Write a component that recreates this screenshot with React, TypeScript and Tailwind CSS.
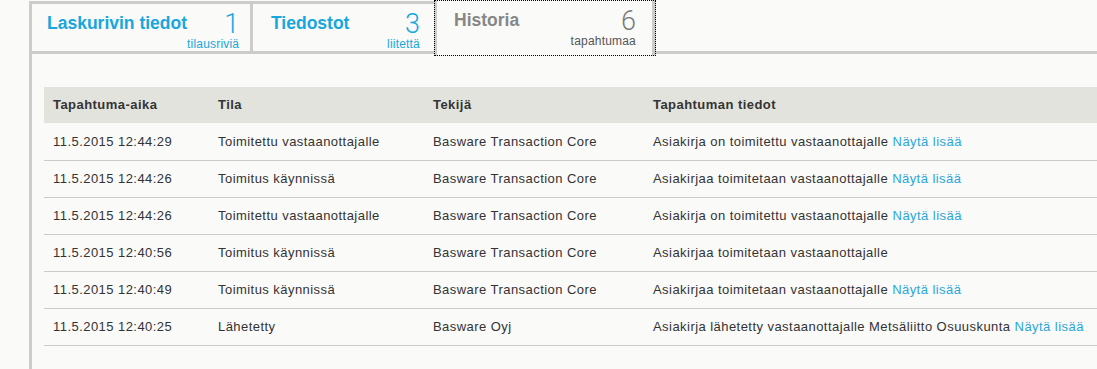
import React from "react";

const rows: { time: string; tila: string; tekija: string; info: string; link: boolean }[] = [
  { time: "11.5.2015 12:44:29", tila: "Toimitettu vastaanottajalle", tekija: "Basware Transaction Core", info: "Asiakirja on toimitettu vastaanottajalle", link: true },
  { time: "11.5.2015 12:44:26", tila: "Toimitus käynnissä", tekija: "Basware Transaction Core", info: "Asiakirjaa toimitetaan vastaanottajalle", link: true },
  { time: "11.5.2015 12:44:26", tila: "Toimitettu vastaanottajalle", tekija: "Basware Transaction Core", info: "Asiakirja on toimitettu vastaanottajalle", link: true },
  { time: "11.5.2015 12:40:56", tila: "Toimitus käynnissä", tekija: "Basware Transaction Core", info: "Asiakirjaa toimitetaan vastaanottajalle", link: false },
  { time: "11.5.2015 12:40:49", tila: "Toimitus käynnissä", tekija: "Basware Transaction Core", info: "Asiakirjaa toimitetaan vastaanottajalle", link: true },
  { time: "11.5.2015 12:40:25", tila: "Lähetetty", tekija: "Basware Oyj", info: "Asiakirja lähetetty vastaanottajalle Metsäliitto Osuuskunta", link: true },
];

function TabContent({
  title,
  num,
  sub,
  active,
}: {
  title: string;
  num: string;
  sub: string;
  active?: boolean;
}) {
  return (
    <div className="flex h-full justify-between">
      <div
        className={`whitespace-nowrap pt-[11px] text-[17.5px] font-bold leading-none ${
          active ? "text-[#878787]" : "text-[#17a7dc]"
        }`}
      >
        {title}
      </div>
      <div className="flex flex-col items-end pt-[7px]">
        <div
          className={`font-['Roboto'] text-[27px] font-light leading-[27px] ${
            active ? "text-[#7a7a7a]" : "text-[#17a7dc]"
          }`}
        >
          {num}
        </div>
        <div
          className={`whitespace-nowrap text-[12px] leading-[12px] tracking-[0.2px] ${
            active ? "text-[#555555]" : "text-[#17a7dc]"
          }`}
        >
          {sub}
        </div>
      </div>
    </div>
  );
}

export default function App() {
  return (
    <div className="h-[369px] w-[1097px] overflow-hidden bg-[#fafaf9] pl-[29px] pt-px font-['Liberation_Sans',Arial,sans-serif]">
      <div className="h-[400px] border-l-[3px] border-[#cccccc]">
        <div className="flex h-[53px] items-start">
          <div className="h-[53px] w-[221px] border-y-[3px] border-r-[3px] border-[#cccccc] px-[15px]">
            <TabContent title="Laskurivin tiedot" num="1" sub="tilausriviä" />
          </div>
          <div className="h-[53px] w-[184px] border-y-[3px] border-r-[3px] border-[#cccccc] pl-[18px] pr-[14px]">
            <TabContent title="Tiedostot" num="3" sub="liitettä" />
          </div>
          <div className="relative z-10 -ml-[3px] -mt-px h-[56px] w-[222px] border-l-[3px] border-r-[4px] border-[#cccccc] bg-[#fafaf9] pl-[17px] pr-[16px] pt-px outline-1 -outline-offset-1 outline-dotted outline-black">
            <TabContent title="Historia" num="6" sub="tapahtumaa" active />
          </div>
          <div className="h-[53px] flex-1 border-b-[3px] border-[#cccccc]" />
        </div>
        <div className="pl-3 pt-[33px]">
          <table className="w-[1100px] table-fixed border-collapse text-left text-[13px] tracking-[0.45px] text-[#333333]">
            <colgroup>
              <col className="w-[165px]" />
              <col className="w-[215px]" />
              <col className="w-[220px]" />
              <col />
            </colgroup>
            <thead>
              <tr className="h-[36px] bg-[#e3e3de]">
                <th className="px-[9px] font-bold">Tapahtuma-aika</th>
                <th className="px-[9px] font-bold">Tila</th>
                <th className="px-[9px] font-bold">Tekijä</th>
                <th className="px-[9px] font-bold">Tapahtuman tiedot</th>
              </tr>
            </thead>
            <tbody>
              {rows.map((r, i) => (
                <tr key={i} className="h-[37px] border-b border-[#cccccc]">
                  <td className="whitespace-nowrap px-[9px]">{r.time}</td>
                  <td className="whitespace-nowrap px-[9px]">{r.tila}</td>
                  <td className="whitespace-nowrap px-[9px]">{r.tekija}</td>
                  <td className="whitespace-nowrap px-[9px]">
                    {r.info}
                    {r.link && (
                      <>
                        {" "}
                        <a className="text-[#2aa6da]">Näytä lisää</a>
                      </>
                    )}
                  </td>
                </tr>
              ))}
            </tbody>
          </table>
        </div>
      </div>
    </div>
  );
}
